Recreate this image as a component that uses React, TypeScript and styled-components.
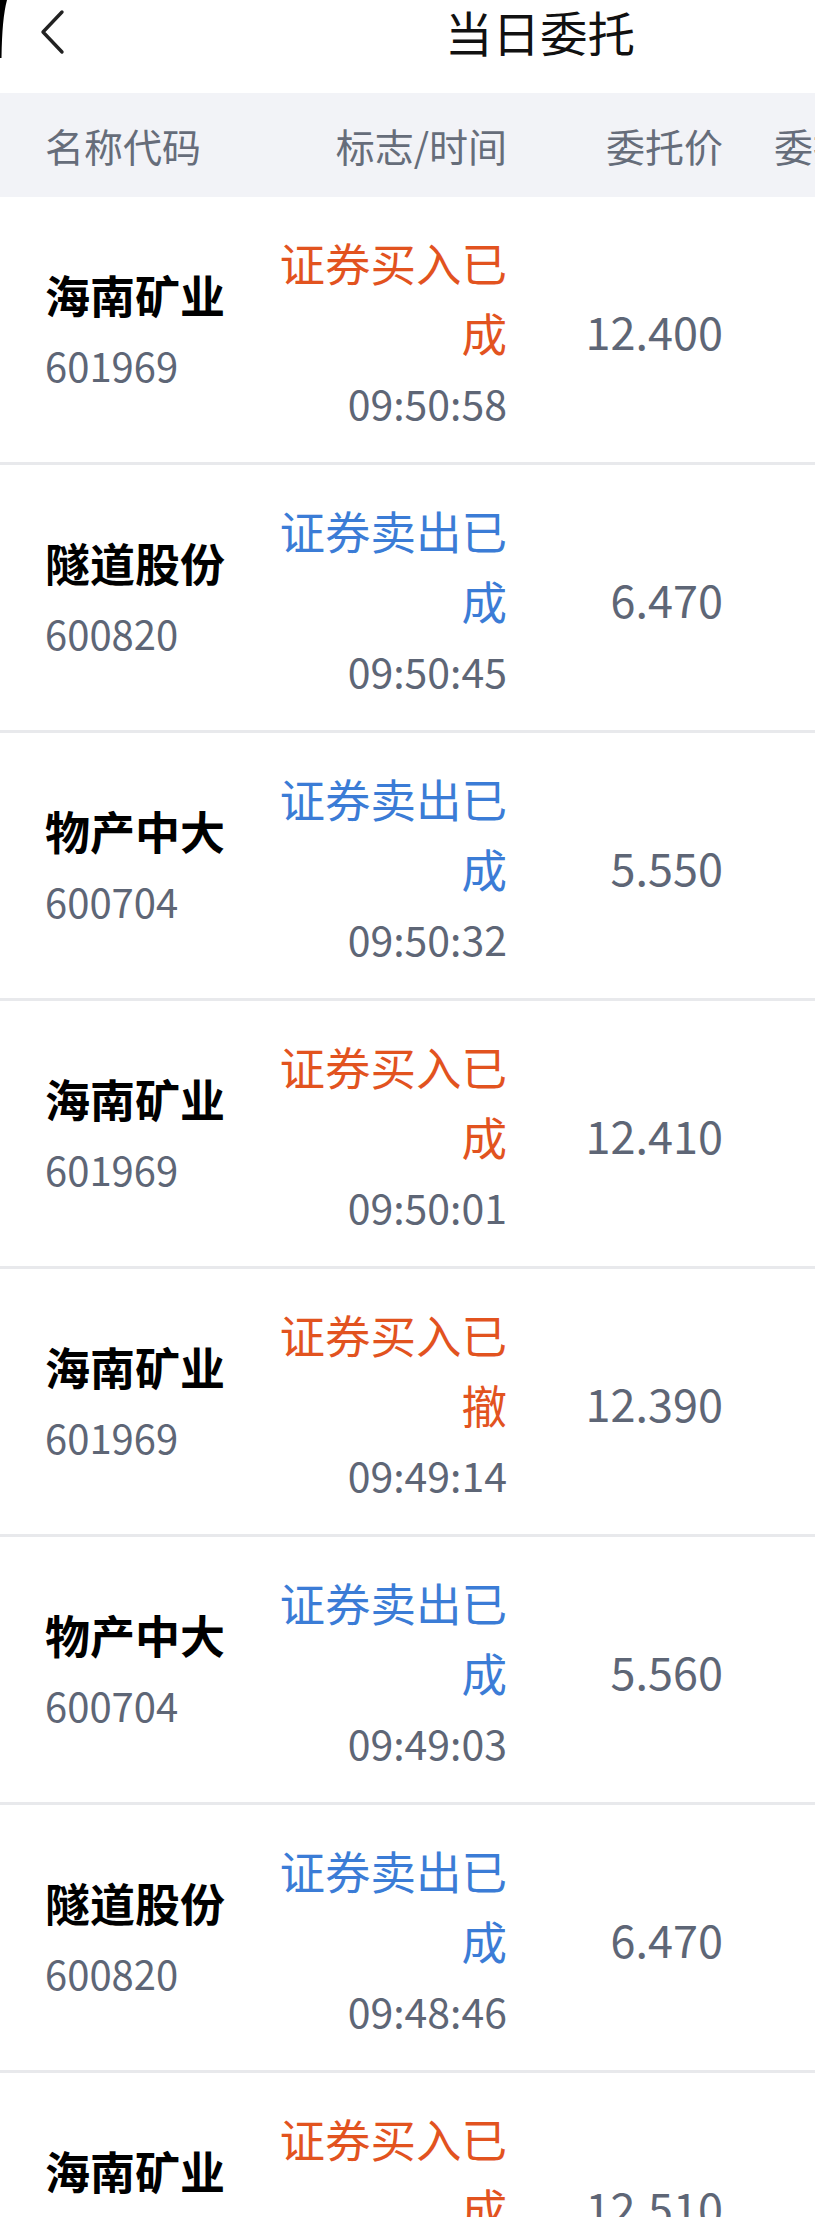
import React from 'react';
import styled, { createGlobalStyle } from 'styled-components';

const GlobalStyle = createGlobalStyle`
  html, body {
    margin: 0;
    padding: 0;
    background: #fff;
    overflow: hidden;
  }
  body {
    font-family: 'Noto Sans CJK SC', 'Noto Sans', sans-serif;
    -webkit-font-smoothing: antialiased;
  }
`;

const Page = styled.div`
  position: relative;
  width: 815px;
  background: #fff;
`;

const Corner = styled.svg`
  position: absolute;
  left: 0;
  top: 0;
`;

const NavBar = styled.div`
  height: 93px;
  box-sizing: border-box;
  display: flex;
  align-items: flex-start;
  background: #fff;
`;

const NavInner = styled.div`
  height: 64px;
  width: 100%;
  display: flex;
  align-items: center;
`;

const BackButton = styled.div`
  width: 62px;
  padding-left: 40px;
  display: flex;
  align-items: center;
`;

const Title = styled.div`
  margin-left: 343px;
  font-size: 47.5px;
  line-height: 64px;
  color: #111;
`;

const cols = '234px 228px 216px 1fr';

const HeadRow = styled.div`
  height: 104px;
  background: #f2f3f7;
  display: grid;
  grid-template-columns: ${cols};
  align-items: center;
  padding-left: 45px;
  box-sizing: border-box;
  white-space: nowrap;
  overflow: hidden;
`;

const HeadCell = styled.div<{ align?: 'left' | 'right' }>`
  font-size: 39px;
  color: #666d7a;
  text-align: ${({ align }) => align || 'left'};
`;

const HeadExtra = styled(HeadCell)`
  padding-left: 51px;
`;

const Row = styled.div`
  height: 268px;
  box-sizing: border-box;
  border-bottom: 3px solid #e8e9ec;
  display: grid;
  grid-template-columns: ${cols};
  align-items: center;
  padding-left: 45px;
`;

const NameCell = styled.div`
  display: flex;
  flex-direction: column;
`;

const Name = styled.div`
  font-size: 45px;
  font-weight: 700;
  line-height: 70px;
  color: #000;
  white-space: nowrap;
`;

const Code = styled.div`
  font-size: 40px;
  line-height: 70px;
  color: #5e6676;
`;

const StatusCell = styled.div`
  display: flex;
  flex-direction: column;
  align-items: flex-end;
  padding-top: 4px;
`;

const Status = styled.div<{ side: 'buy' | 'sell' }>`
  width: 232px;
  font-size: 45.5px;
  line-height: 70px;
  text-align: right;
  color: ${({ side }) => (side === 'buy' ? '#e2531f' : '#3b7cd6')};
`;

const Time = styled.div`
  font-size: 41px;
  line-height: 70px;
  color: #5e6676;
  text-align: right;
`;

const Price = styled.div`
  font-size: 45px;
  color: #5e6676;
  text-align: right;
  padding-top: 2px;
`;

type Order = {
  name: string;
  code: string;
  side: 'buy' | 'sell';
  status: string;
  time: string;
  price: string;
};

const orders: Order[] = [
  { name: '海南矿业', code: '601969', side: 'buy', status: '证券买入已成', time: '09:50:58', price: '12.400' },
  { name: '隧道股份', code: '600820', side: 'sell', status: '证券卖出已成', time: '09:50:45', price: '6.470' },
  { name: '物产中大', code: '600704', side: 'sell', status: '证券卖出已成', time: '09:50:32', price: '5.550' },
  { name: '海南矿业', code: '601969', side: 'buy', status: '证券买入已成', time: '09:50:01', price: '12.410' },
  { name: '海南矿业', code: '601969', side: 'buy', status: '证券买入已撤', time: '09:49:14', price: '12.390' },
  { name: '物产中大', code: '600704', side: 'sell', status: '证券卖出已成', time: '09:49:03', price: '5.560' },
  { name: '隧道股份', code: '600820', side: 'sell', status: '证券卖出已成', time: '09:48:46', price: '6.470' },
  { name: '海南矿业', code: '601969', side: 'buy', status: '证券买入已成', time: '09:48:31', price: '12.510' },
];

const App = () => {
  return (
    <>
      <GlobalStyle />
      <Page>
        <Corner width="8" height="60" viewBox="0 0 8 60">
          <path d="M0 0 L7 0 Q2 18 1.5 58 L0 58 Z" fill="#000" />
        </Corner>
        <NavBar>
          <NavInner>
            <BackButton>
              <svg width="26" height="46" viewBox="0 0 26 46">
                <path d="M22 3 L3 23 L22 43" fill="none" stroke="#222" strokeWidth="3.4" strokeLinecap="round" strokeLinejoin="round" />
              </svg>
            </BackButton>
            <Title>当日委托</Title>
          </NavInner>
        </NavBar>

        <HeadRow>
          <HeadCell>名称代码</HeadCell>
          <HeadCell align="right">标志/时间</HeadCell>
          <HeadCell align="right">委托价</HeadCell>
          <HeadExtra>委托数量</HeadExtra>
        </HeadRow>

        {orders.map((o, i) => (
          <Row key={i}>
            <NameCell>
              <Name>{o.name}</Name>
              <Code>{o.code}</Code>
            </NameCell>
            <StatusCell>
              <Status side={o.side}>{o.status}</Status>
              <Time>{o.time}</Time>
            </StatusCell>
            <Price>{o.price}</Price>
            <div />
          </Row>
        ))}
      </Page>
    </>
  );
};

export default App;
